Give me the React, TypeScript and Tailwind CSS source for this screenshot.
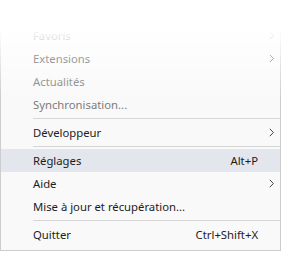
import React from 'react';

type Item = {
  label: string;
  shortcut?: string;
  submenu?: boolean;
  disabled?: boolean;
  active?: boolean;
};

const groups: Item[][] = [
  [
    { label: 'Favoris', submenu: true },
    { label: 'Extensions', submenu: true },
    { label: 'Actualités', disabled: true },
    { label: 'Synchronisation...', disabled: true },
  ],
  [{ label: 'Développeur', submenu: true }],
  [
    { label: 'Réglages', shortcut: 'Alt+P', active: true },
    { label: 'Aide', submenu: true },
    { label: 'Mise à jour et récupération...' },
  ],
  [{ label: 'Quitter', shortcut: 'Ctrl+Shift+X' }],
];

const Chevron = () => (
  <svg width="5" height="9" viewBox="0 0 5 9" fill="none">
    <path d="M0.8 0.8l3.6 3.7-3.6 3.7" stroke="currentColor" strokeWidth="1" />
  </svg>
);

const Row = ({ item }: { item: Item }) => (
  <div
    className={`flex items-center h-[23px] pl-[32px] pr-[22px] relative ${
      item.active ? 'bg-[#e3e6ed]' : ''
    } ${item.disabled ? 'text-[#7c7c7c]' : 'text-[#1c1c1c]'}`}
  >
    <span className="flex-1">{item.label}</span>
    {item.shortcut && <span>{item.shortcut}</span>}
    {item.submenu && (
      <span className="absolute right-[6px] top-[7px] text-[#444]">
        <Chevron />
      </span>
    )}
  </div>
);

export default function App() {
  return (
    <div className="w-[282px] h-[253px] bg-white overflow-hidden">
      <div
        className="relative w-[281px] bg-[#f9f9f9] border-x border-b border-[#cdcdcd] pt-[24px] pb-[4px] text-[11.3px] leading-[23px]"
        style={{ fontFamily: '"Noto Sans", "Open Sans", sans-serif' }}
      >
        {groups.map((g, i) => (
          <div key={i}>
            {i > 0 && <div className="ml-[32px] my-[2px] h-px bg-[#d6d6d6]" />}
            {g.map((item) => (
              <Row key={item.label} item={item} />
            ))}
          </div>
        ))}
        <div className="absolute -left-px -right-px top-0 h-[96px] bg-gradient-to-b from-white from-30% to-transparent" />
      </div>
    </div>
  );
}
